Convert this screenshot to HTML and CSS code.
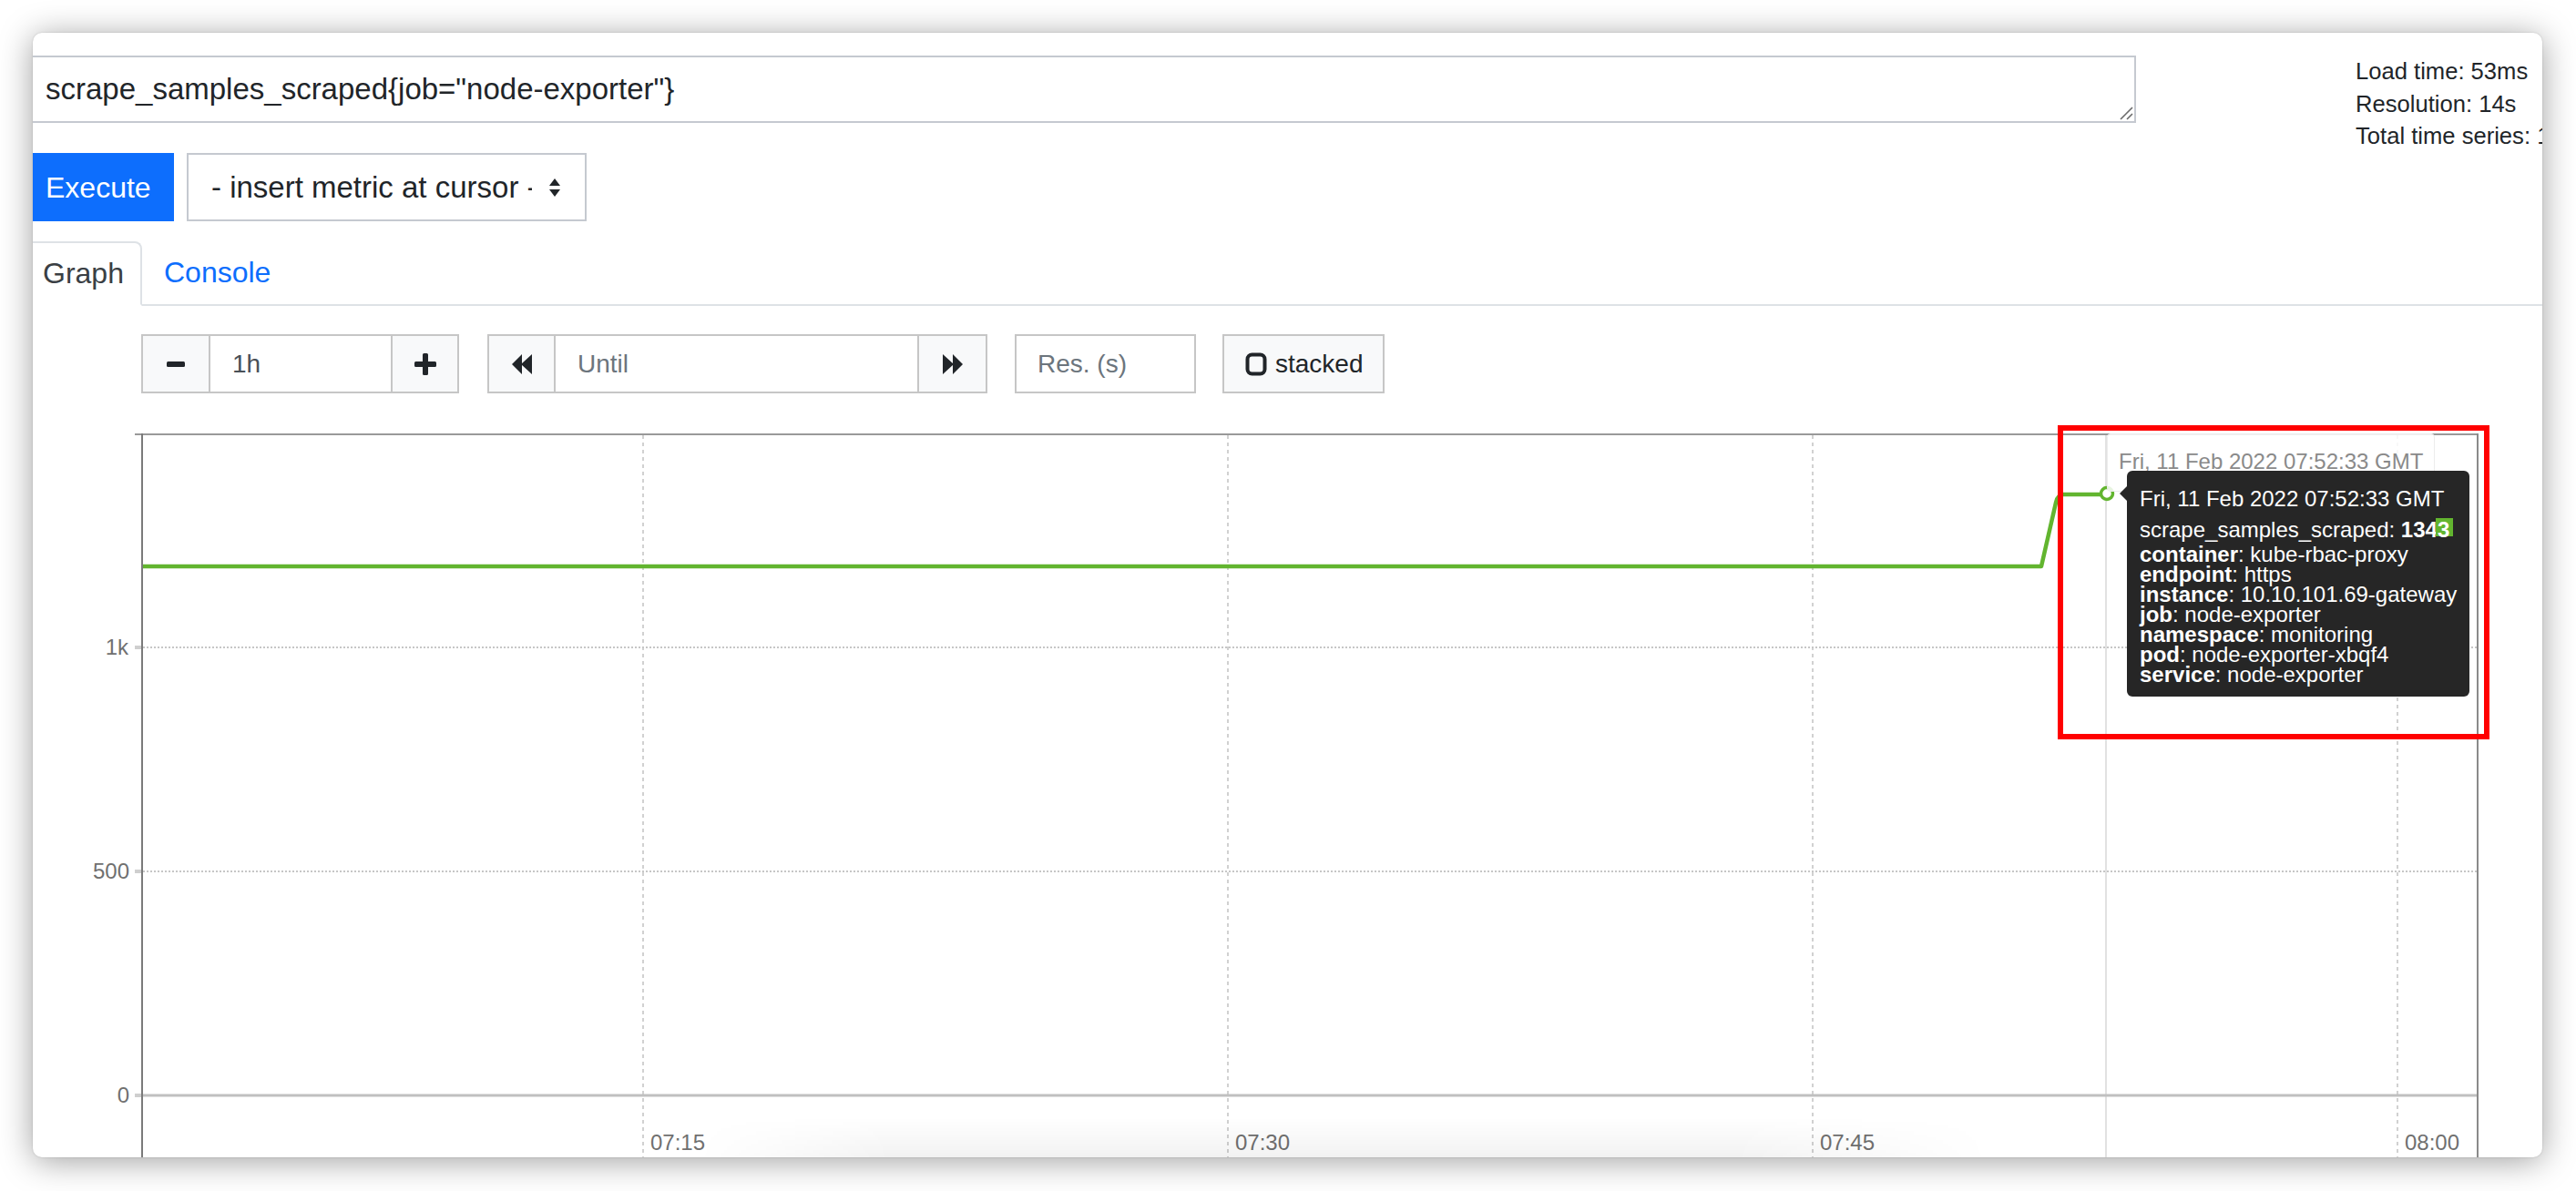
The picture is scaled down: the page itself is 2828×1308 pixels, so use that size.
FILE: index.html
```html
<!DOCTYPE html>
<html>
<head>
<meta charset="utf-8">
<title>Prometheus</title>
<link rel="stylesheet" href="styles.css">
</head>
<body>
<div class="window">
  <div class="content">
    <div class="top">
      <div class="query">
        <div class="expr">
          <span class="expr-text">scrape_samples_scraped{job="node-exporter"}</span>
          <svg class="resize" width="16" height="16" viewBox="0 0 16 16"><path d="M2 15 L15 2 M9 15 L15 9" stroke="#6b6b6b" stroke-width="1.6" fill="none"/></svg>
        </div>
        <div class="exec-row">
          <div class="btn-exec">Execute</div>
          <div class="select">
            <span class="select-text">- insert metric at cursor -</span>
            <svg class="select-arrows" width="14" height="20" viewBox="0 0 14 20"><path d="M7 0 L13 8 H1 Z M7 20 L13 12 H1 Z" fill="#212529"/></svg>
          </div>
        </div>
      </div>
      <div class="info">
        <div>Load time: 53ms</div>
        <div>Resolution: 14s</div>
        <div>Total time series: 1</div>
      </div>
    </div>

    <div class="tabs">
      <div class="tab active">Graph</div>
      <div class="tab link">Console</div>
    </div>

    <div class="controls">
      <div class="group">
        <div class="cbtn minus"><svg width="20" height="6" viewBox="0 0 20 6"><rect x="0" y="0" width="20" height="6" rx="1.5" fill="#212529"/></svg></div>
        <div class="cinput range">1h</div>
        <div class="cbtn plus"><svg width="24" height="24" viewBox="0 0 24 24"><path d="M9 1.5 Q9 0 10.5 0 H13.5 Q15 0 15 1.5 V9 H22.5 Q24 9 24 10.5 V13.5 Q24 15 22.5 15 H15 V22.5 Q15 24 13.5 24 H10.5 Q9 24 9 22.5 V15 H1.5 Q0 15 0 13.5 V10.5 Q0 9 1.5 9 H9 Z" fill="#212529"/></svg></div>
      </div>
      <div class="group group2">
        <div class="cbtn back"><svg width="22" height="24" viewBox="0 0 22 24"><path d="M0 12 L11 1 V23 Z M10 12 L22 1 V23 Z" fill="#212529"/></svg></div>
        <div class="cinput until placeholder">Until</div>
        <div class="cbtn fwd"><svg width="22" height="24" viewBox="0 0 22 24"><path d="M22 12 L11 1 V23 Z M12 12 L0 1 V23 Z" fill="#212529"/></svg></div>
      </div>
      <div class="cinput res placeholder">Res. (s)</div>
      <div class="cbtn stacked">
        <svg width="24" height="26" viewBox="0 0 24 26"><rect x="2.5" y="2.5" width="19" height="21" rx="5" fill="none" stroke="#212529" stroke-width="4"/></svg>
        <span>stacked</span>
      </div>
    </div>

    <div class="graph">
      <svg class="plot" width="2765" height="872" viewBox="0 0 2765 872">
        <g transform="translate(-26 -436)">
          <g stroke="#c2c2c2" stroke-width="1.5" stroke-dasharray="4 4">
            <line x1="706" y1="478" x2="706" y2="1308"/>
            <line x1="1348" y1="478" x2="1348" y2="1308"/>
            <line x1="1990" y1="478" x2="1990" y2="1308"/>
            <line x1="2632" y1="478" x2="2632" y2="1308"/>
          </g>
          <g stroke="#c6c6c6" stroke-width="2" stroke-dasharray="2 2">
            <line x1="157" y1="711" x2="2719" y2="711"/>
            <line x1="157" y1="957" x2="2719" y2="957"/>
          </g>
          <line x1="2312" y1="478" x2="2312" y2="1308" stroke="#e2e2e2" stroke-width="2"/>
          <line x1="148" y1="1203" x2="2720" y2="1203" stroke="#c0c0c0" stroke-width="3"/>
          <g stroke="#cfcfcf" stroke-width="4">
            <line x1="148" y1="711" x2="156" y2="711"/>
            <line x1="148" y1="957" x2="156" y2="957"/>
            <line x1="148" y1="1203" x2="156" y2="1203"/>
          </g>
          <line x1="148" y1="477" x2="2721" y2="477" stroke="#999" stroke-width="2"/>
          <line x1="156" y1="476" x2="156" y2="1308" stroke="#7a7a7a" stroke-width="2"/>
          <line x1="2720" y1="476" x2="2720" y2="1308" stroke="#8a8a8a" stroke-width="2"/>
          <path d="M157 622 L2241 622 L2257 552 Q2259 543 2265 543 L2312 543" fill="none" stroke="#62b52f" stroke-width="4.5" stroke-linejoin="round"/>
          <circle cx="2313" cy="542" r="6.5" fill="#fff" stroke="#62b52f" stroke-width="3.5"/>
          <g class="axis-text">
            <text x="141" y="711" dy="0.35em" text-anchor="end">1k</text>
            <text x="142" y="957" dy="0.35em" text-anchor="end">500</text>
            <text x="142" y="1203" dy="0.35em" text-anchor="end">0</text>
            <text x="714" y="1255" dy="0.35em">07:15</text>
            <text x="1356" y="1255" dy="0.35em">07:30</text>
            <text x="1998" y="1255" dy="0.35em">07:45</text>
            <text x="2640" y="1255" dy="0.35em">08:00</text>
          </g>
        </g>
      </svg>
      <div class="time-label">Fri, 11 Feb 2022 07:52:33 GMT</div>
      <div class="tooltip">
        <div class="tt-title">Fri, 11 Feb 2022 07:52:33 GMT</div>
        <div class="tt-metric">scrape_samples_scraped: <b>134<span class="swatch">3</span></b></div>
        <div class="tt-labels">
          <div><b>container</b>: kube-rbac-proxy</div>
          <div><b>endpoint</b>: https</div>
          <div><b>instance</b>: 10.10.101.69-gateway</div>
          <div><b>job</b>: node-exporter</div>
          <div><b>namespace</b>: monitoring</div>
          <div><b>pod</b>: node-exporter-xbqf4</div>
          <div><b>service</b>: node-exporter</div>
        </div>
      </div>
      <div class="highlight"></div>
    </div>
  </div>
  <div class="bottom-fade"></div>
</div>
</body>
</html>
```

FILE: styles.css
```css
* { box-sizing: border-box; }
html, body { margin: 0; padding: 0; }
body {
  width: 2828px;
  height: 1308px;
  overflow: hidden;
  background: #fff;
  font-family: "Liberation Sans", Arial, sans-serif;
  color: #212529;
}
.window {
  position: relative;
  margin: 36px 0 0 36px;
  width: 2755px;
  height: 1235px;
  background: #fff;
  border-radius: 10px;
  overflow: hidden;
  box-shadow: 0 4px 36px rgba(0, 0, 0, 0.38), 0 0 2px rgba(0, 0, 0, 0.18);
}
.content {
  margin-left: -10px;
  width: 2790px;
  padding-top: 25px;
}
.top { display: flex; align-items: flex-start; }
.query { width: 2319px; flex: none; }
.expr {
  position: relative;
  height: 74px;
  border: 2px solid #c5c9d0;
  display: flex;
  align-items: center;
  padding-left: 22px;
  font-size: 33px;
  white-space: nowrap;
}
.resize { position: absolute; right: 1px; bottom: 1px; }
.exec-row { display: flex; margin-top: 33px; height: 75px; }
.btn-exec {
  width: 165px;
  background: #0d6efd;
  color: #fff;
  font-size: 32px;
  display: flex;
  align-items: center;
  padding-left: 24px;
  padding-top: 2px;
}
.select {
  margin-left: 14px;
  width: 439px;
  border: 2px solid #c5c9d0;
  display: flex;
  align-items: center;
  padding-left: 25px;
  font-size: 33px;
}
.select-text { width: 352px; flex: none; overflow: hidden; white-space: nowrap; }
.select-arrows { margin-left: 18px; flex: none; }
.info {
  margin-left: 241px;
  font-size: 25.6px;
  line-height: 35.5px;
  white-space: nowrap;
}
.tabs {
  display: flex;
  margin-top: 22px;
  height: 71px;
  border-bottom: 2px solid #dee2e6;
}
.tab { display: flex; align-items: center; font-size: 32px; }
.tab.active {
  width: 130px;
  height: 71px;
  margin-bottom: -2px;
  padding-left: 19px;
  border: 2px solid #dee2e6;
  border-bottom-color: #fff;
  border-radius: 8px 8px 0 0;
  background: #fff;
  color: #3a3f44;
}
.tab.link { padding-left: 24px; color: #0d6efd; }
.controls {
  display: flex;
  margin-top: 31px;
  padding-left: 129px;
  height: 65px;
  font-size: 28px;
}
.group { display: flex; }
.group2 { margin-left: 31px; }
.cbtn, .cinput {
  height: 65px;
  border: 2px solid #c6c6c6;
  display: flex;
  align-items: center;
  flex: none;
}
.cbtn { background: #f8f9fa; justify-content: center; }
.cinput { background: #fff; padding-left: 24px; color: #495057; }
.placeholder { color: #6c757d; }
.minus { width: 76px; }
.range { width: 202px; margin-left: -2px; }
.plus { width: 75px; margin-left: -2px; }
.back { width: 75px; }
.until { width: 401px; margin-left: -2px; }
.fwd { width: 77px; margin-left: -2px; }
.res { width: 199px; margin-left: 30px; padding-left: 23px; }
.stacked {
  width: 178px;
  margin-left: 29px;
  justify-content: flex-start;
  padding-left: 23px;
  gap: 9px;
  color: #212529;
}
.graph { position: relative; margin-top: 4px; height: 872px; }
.plot { display: block; }
.axis-text text {
  font-family: "Liberation Sans", Arial, sans-serif;
  font-size: 24px;
  fill: #707070;
}
.time-label {
  position: absolute;
  left: 2287px;
  top: 40px;
  width: 360px;
  height: 64px;
  border: 1px solid #ececec;
  border-radius: 4px;
  background: rgba(255, 255, 255, 0.85);
  color: #8a8a8a;
  font-size: 24px;
  line-height: 30px;
  padding: 15px 12px;
  white-space: nowrap;
}
.tooltip {
  position: absolute;
  left: 2309px;
  top: 81px;
  width: 376px;
  height: 248px;
  background: #262626;
  border-radius: 6px;
  color: #fff;
  font-size: 24px;
  padding: 17px 14px 13px;
  white-space: nowrap;
}
.tooltip::before {
  content: "";
  position: absolute;
  left: -8px;
  top: 17px;
  border-style: solid;
  border-width: 8px 8px 8px 0;
  border-color: transparent #262626 transparent transparent;
}
.tt-title { line-height: 28px; margin-bottom: 6px; }
.tt-metric { line-height: 28px; margin-bottom: 2px; }
.tt-labels { line-height: 22px; }
.swatch {
  display: inline-block;
  background: #62b52f;
  line-height: 14px;
  padding: 6px 4px 0 2px;
  margin-left: -2px;
}
.highlight {
  position: absolute;
  left: 2233px;
  top: 31px;
  width: 474px;
  height: 345px;
  border: 6px solid #ff0000;
}
.bottom-fade {
  position: absolute;
  left: 730px;
  bottom: 0;
  width: 1420px;
  height: 44px;
  background: linear-gradient(rgba(0, 0, 0, 0), rgba(0, 0, 0, 0.05));
  -webkit-mask-image: linear-gradient(to right, transparent, #000 15%, #000 80%, transparent);
  mask-image: linear-gradient(to right, transparent, #000 15%, #000 80%, transparent);
}
```
